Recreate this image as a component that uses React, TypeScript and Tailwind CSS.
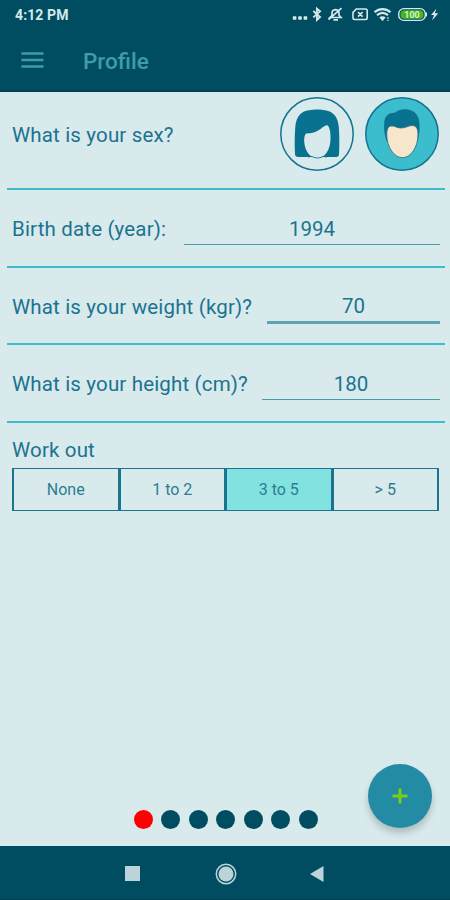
import { useState } from "react";

const workouts = ["None", "1 to 2", "3 to 5", "> 5"];

function StatusBar() {
  return (
    <div className="flex h-[30px] items-center justify-between pl-[15px] text-[#d5e9ec]">
      <span className="text-[14px] font-bold leading-none tracking-[0.1px]">4:12 PM</span>
      <svg width="158" height="30" viewBox="292 0 158 30" fill="none" stroke="currentColor" strokeWidth="1.4">
        <g fill="currentColor" stroke="none">
          <rect x="292.8" y="16.3" width="3.6" height="3.4" rx="0.6" />
          <rect x="298.2" y="16.3" width="3.6" height="3.4" rx="0.6" />
          <rect x="303.6" y="16.3" width="3.6" height="3.4" rx="0.6" />
        </g>
        {/* bluetooth */}
        <path d="M313.3 11l6.8 6-3.2 2.900V8.6l3.2 2.700-6.8 6.100" strokeWidth="1.8" />
        {/* muted bell */}
        <path d="M330 17.500h11l-2-2.300v-2c0-2.200-1.300-3.300-3.500-3.500-2.200.2-3.500 1.300-3.500 3.500v2.300zM333.500 19.800h4.500M328.500 19.600l13-11.400" strokeWidth="1.7" />
        {/* sim */}
        <path d="M356.300 9h9.200c1.100 0 1.700.6 1.700 1.700v7.100c0 1.100-.6 1.700-1.700 1.700h-10.800c-1.100 0-1.700-.6-1.700-1.700v-5.400zM358 12.100l4.600 4.500M362.600 12.100l-4.600 4.500" strokeWidth="1.6" />
        {/* wifi */}
        <path d="M374.500 12.200c4.800-4.200 11.200-4.200 16 0M377 15.200c3.400-2.800 7.600-2.800 11 0" strokeWidth="2.2" />
        <path d="M379.300 17.400c2.100-1.700 4.300-1.700 6.400 0l-3.200 3.500z" fill="currentColor" stroke="none" />
        <path d="M388 17v1.800M388 19.800v1.200" strokeWidth="1.2" />
        {/* battery */}
        <rect x="398.7" y="8.600" width="26.600" height="11.800" rx="5.200" />
        <rect x="400.500" y="10.300" width="23" height="8.400" rx="3.800" fill="#46b51e" stroke="none" />
        <text x="412" y="17.700" textAnchor="middle" fill="#d3f5c8" stroke="none" fontSize="9" fontWeight="700">100</text>
        <path d="M425.800 12.500h1.200v4h-1.200z" fill="currentColor" stroke="none" />
        <path d="M436.500 8.600l-5.500 6.500h3l-2 5.300 6.300-7.100h-3.500z" fill="currentColor" stroke="none" />
      </svg>
    </div>
  );
}

function WomanIcon() {
  return (
    <svg className="size-[74px]" viewBox="0 0 74 74">
      <circle cx="37" cy="37" r="36.200" fill="#d8eaec" stroke="#137490" strokeWidth="1.500" />
      <path d="M18 60C16.300 60 15.200 59 15 57.200 14.500 48 14.600 38 15.300 30 16 20 21 14 29 13.300 33 12.300 41 12.200 45 13.200 54 14.500 58 20.500 58.800 30 59.500 39 59.500 49 59 57.300 58.900 59 58 60 56.300 60z" fill="#0a7291" />
      <path d="M26 36.500C31.500 36.500 36.500 35 40.500 32 43 30 45 28.200 47.300 28.200 49.800 30 50.700 35.500 50.500 42 50.300 52 45.500 61 37.500 61S24.800 53.500 24.200 44.500C24 41 24.500 38.500 26 36.500z" fill="#d8eaec" />
      <path d="M28 60.200c2.300-1 4.300-.8 6 .1 2.300.9 4.900.9 7.200 0 1.600-.9 3.500-1.100 5.600-.1" fill="none" stroke="#0a7291" strokeWidth="0.900" />
    </svg>
  );
}

function ManIcon() {
  return (
    <svg className="size-[74px]" viewBox="0 0 74 74">
      <circle cx="37" cy="37" r="36.200" fill="#3bbdce" stroke="#137490" strokeWidth="1.500" />
      <path d="M21.500 44C19.500 38 18.700 32 19.200 26 19.700 19 23.500 15.300 30 15.800 33 13 37 12.200 41 12.300 50 12.800 54.500 19 54.600 28 54.700 34 54 39 52.500 44z" fill="#0a7291" />
      <path d="M21.800 38C21.800 33 22.500 29.500 26 29 29.500 28.600 31 30.800 36.500 31 41.500 30.800 43 28.500 47.500 28.500 51.500 29 53 31.500 53 37.500 53 50 46 60.700 37.500 60.700S21.800 50 21.800 38z" fill="#f6e6cb" stroke="#2c7381" strokeWidth="0.900" />
    </svg>
  );
}

type FieldProps = {
  label: string;
  value: string;
  labelClass: string;
  inputClass: string;
};

function Field({ label, value, labelClass, inputClass }: FieldProps) {
  return (
    <div className="ml-[6.500px] mr-[5.500px] flex h-[77.500px] items-start border-b-2 border-[#3fbccb] pl-[5.500px] pr-[4.500px] pt-[25px]">
      <label className={`shrink-0 whitespace-nowrap leading-[28px] tracking-[0.160px] ${labelClass}`}>{label}</label>
      <input
        defaultValue={value}
        aria-label={label}
        className={`min-w-0 flex-1 bg-transparent text-center outline-none ${inputClass}`}
      />
    </div>
  );
}

export default function App() {
  const [sex, setSex] = useState("male");
  const [workout, setWorkout] = useState("3 to 5");
  const [page, setPage] = useState(0);

  return (
    <div className="flex h-[900px] w-[450px] flex-col overflow-hidden bg-[#d8eaec] font-['Roboto',sans-serif] text-[20.500px] text-[#1b7390]">
      <header className="h-[92px] shrink-0 border-b-2 border-[#063f54] bg-[#004d61]">
        <StatusBar />
        <div className="flex h-[62px] items-center pl-[21px] text-[#3d9dab]">
          <button aria-label="Menu" className="-mt-[2px]">
            <svg width="23" height="18" viewBox="0 0 23 18" stroke="currentColor" strokeWidth="2.400">
              <path d="M.5 2.500h22M.5 9h22M.5 15.500h22" />
            </svg>
          </button>
          <h1 className="ml-[39px] text-[22.500px] font-medium leading-none">Profile</h1>
        </div>
      </header>

      <main className="flex-1">
        <div className="ml-[6.500px] mr-[5.500px] flex h-[98px] items-start border-b-2 border-[#3fbccb] pl-[5.500px] pr-[5.500px] pt-[5px]">
          <span className="mt-[23.500px] flex-1 leading-[28px] tracking-[0.160px]">What is your sex?</span>
          <div className="flex gap-[11px]">
            <button aria-label="Female" aria-pressed={sex === "female"} onClick={() => setSex("female")}>
              <WomanIcon />
            </button>
            <button aria-label="Male" aria-pressed={sex === "male"} onClick={() => setSex("male")}>
              <ManIcon />
            </button>
          </div>
        </div>

        <Field label="Birth date (year):" value="1994" labelClass="w-[172px]" inputClass="h-[29.500px] border-b-[1.500px] border-[#4b9aa8]" />
        <Field label="What is your weight (kgr)?" value="70" labelClass="w-[255px]" inputClass="h-[31px] border-b-3 border-[#5ba3ae] pb-px" />
        <Field label="What is your height (cm)?" value="180" labelClass="w-[250px]" inputClass="h-[30px] border-b-[1.500px] border-[#4b9aa8]" />

        <div className="pl-[12px] pr-[11px] pt-[13px]">
          <p className="leading-[28px] tracking-[0.160px]">Work out</p>
          <div className="mt-[4px] flex h-[43.500px] gap-px border border-[#1b7390] bg-[#1b7390]">
            {workouts.map((w) => (
              <button
                key={w}
                onClick={() => setWorkout(w)}
                className={`flex-1 border-x border-[#1b7390] pt-[2px] text-[16px] text-[#2d7d92] ${
                  workout === w ? "bg-[#82e2df]" : "bg-[#d8eaec]"
                }`}
              >
                {w}
              </button>
            ))}
          </div>
        </div>
      </main>

      <div className="relative flex h-[38px] shrink-0 justify-center gap-[8.500px] pl-px pt-[1.500px]">
        {[0, 1, 2, 3, 4, 5, 6].map((i) => (
          <button
            key={i}
            aria-label={`Page ${i + 1}`}
            onClick={() => setPage(i)}
            className={`size-[19px] rounded-full ${page === i ? "bg-[#ff0000]" : "bg-[#004d61]"}`}
          />
        ))}
        <button
          aria-label="Add"
          className="absolute right-[18px] top-[-44px] flex size-[64px] items-center justify-center rounded-full bg-[#238ca4] shadow-[0_5px_7px_rgba(0,0,0,0.2)]"
        >
          <svg width="16" height="16" viewBox="0 0 16 16" stroke="#7acb1c" strokeWidth="3">
            <path d="M8 .5v15M.5 8h15" />
          </svg>
        </button>
      </div>

      <nav className="flex h-[54px] shrink-0 items-center border-b border-[#063f54] bg-[#004d61] pl-[125px] pt-[2px]">
        <span className="size-[14.500px] bg-[#bcd3d9]" />
        <svg className="ml-[75px]" width="22" height="22" viewBox="0 0 22 22">
          <circle cx="11" cy="11" r="9.700" fill="none" stroke="#bcd3d9" strokeWidth="1.500" />
          <circle cx="11" cy="11" r="7.500" fill="#bcd3d9" />
        </svg>
        <svg className="ml-[73.500px]" width="14" height="16" viewBox="0 0 14 16">
          <path d="M0 8L13.500 0v16z" fill="#bcd3d9" />
        </svg>
      </nav>
    </div>
  );
}
